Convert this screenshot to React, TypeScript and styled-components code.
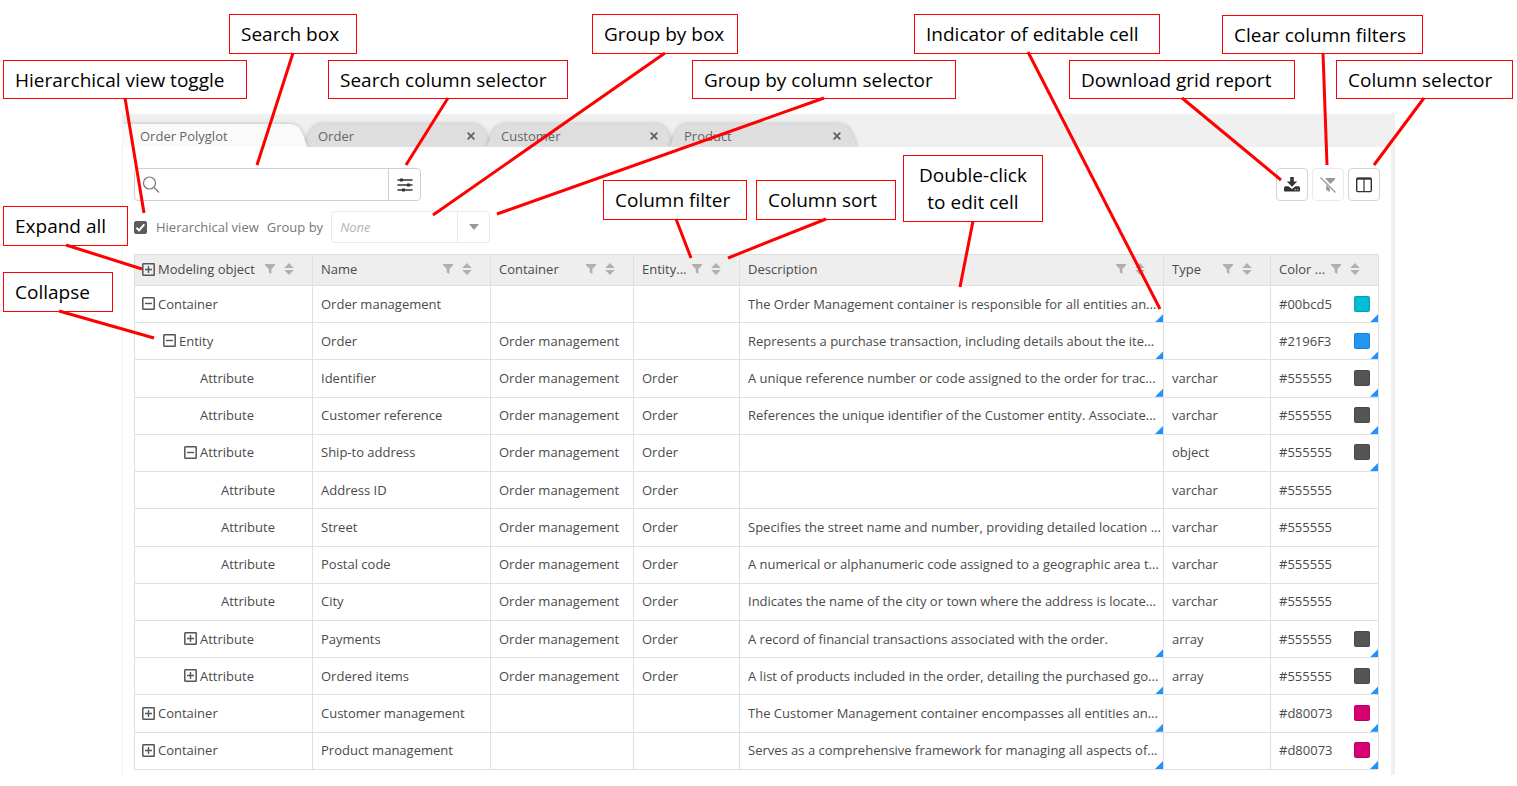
import React from 'react';
import styled, { createGlobalStyle, css } from 'styled-components';

const GlobalStyle = createGlobalStyle`
  *, *::before, *::after { box-sizing: border-box; }
  body {
    margin: 0;
    background: #fff;
    color: #4a4a4a;
    font-family: 'Open Sans', 'Noto Sans', sans-serif;
    font-size: 13px;
    line-height: 18px;
  }
  button, input { font: inherit; color: inherit; }
`;

const Page = styled.main`
  position: relative;
  min-height: 786px;
  padding: 114px 122px 11px;
`;

const Panel = styled.section`
  padding-bottom: 5px;
  border-left: 1px solid #f0f0f0;
  border-right: 4px solid #f0f0f0;
`;

const TabStrip = styled.nav`
  display: flex;
  align-items: flex-end;
  height: 33px;
  padding-top: 10px;
  background: #f0f0f0;
  overflow: hidden;
`;

const TabItem = styled.div<{ $active?: boolean }>`
  position: relative;
  z-index: ${p => (p.$active ? 1 : 0)};
  display: flex;
  align-items: center;
  justify-content: space-between;
  width: 183px;
  height: 23px;
  padding: 0 14px 0 ${p => (p.$active ? 17 : 12)}px;
  color: #666;
`;

const TabShape = styled.svg`
  position: absolute;
  top: -3px;
  left: -3px;
  overflow: visible;
  filter: drop-shadow(0 0 2px rgba(0, 0, 0, 0.25));
`;

const TabLabel = styled.button`
  position: relative;
  padding: 0;
  border: 0;
  background: none;
`;

const TabClose = styled(TabLabel)`
  display: flex;
  color: #606060;
`;

const Toolbar = styled.div`
  display: flex;
  justify-content: space-between;
  padding: 21px 11px 0;
`;

const SearchGroup = styled.div`
  display: flex;
  align-items: center;
  width: 287px;
  height: 33px;
  border: 1px solid #d0d0d0;
  border-radius: 4px;
`;

const SearchIcon = styled.svg`
  flex: none;
  margin-left: 7px;
`;

const TextInput = styled.input<{ $italic?: boolean }>`
  flex: 1;
  min-width: 0;
  padding: 0 8px;
  border: 0;
  outline: 0;
  background: none;
  font-style: ${p => (p.$italic ? 'italic' : 'normal')};
  &::placeholder { color: #b4b4b4; opacity: 1; }
`;

const AddonButton = styled.button<{ $light?: boolean }>`
  display: flex;
  align-items: center;
  justify-content: center;
  align-self: stretch;
  width: 32px;
  padding: 0;
  border: 0;
  border-left: 1px solid ${p => (p.$light ? '#e9e9e9' : '#d0d0d0')};
  background: none;
`;

const Actions = styled.div`
  display: flex;
  gap: 4px;
`;

const IconButton = styled.button`
  display: flex;
  align-items: center;
  justify-content: center;
  width: 32px;
  height: 33px;
  padding: 0;
  border: 1px solid #d4d4d4;
  border-radius: 4px;
  background: #fff;
  color: #333;
  &:disabled { border-color: #ebebeb; color: #999; }
`;

const Options = styled.div`
  display: flex;
  align-items: center;
  gap: 8px;
  padding: 10px 11px 11px;
  color: #777;
`;

const CheckLabel = styled.label`
  display: flex;
  align-items: center;
  gap: 9px;
`;

const CheckHolder = styled.span`
  position: relative;
  display: flex;
`;

const Checkbox = styled.input`
  appearance: none;
  width: 13px;
  height: 13px;
  margin: 0;
  border: 1px solid #5c5c5c;
  border-radius: 2px;
  &:checked { background: #5c5c5c; }
  &:not(:checked) + svg { display: none; }
`;

const CheckMark = styled.svg`
  position: absolute;
  inset: 0;
  pointer-events: none;
`;

const Combo = styled.div`
  display: flex;
  width: 159px;
  height: 32px;
  border: 1px solid #e9e9e9;
  border-radius: 4px;
`;

const GridWrap = styled.div`
  padding: 0 12px 0 11px;
`;

const Grid = styled.table`
  width: 100%;
  table-layout: fixed;
  border-collapse: separate;
  border-spacing: 0;
  border-top: 1px solid #dedede;
  border-left: 1px solid #dedede;
`;

const Body = styled.tbody`
  height: 484px;
`;

const cell = css`
  padding: 0 1px 1px 8px;
  border-right: 1px solid #e0e0e0;
  border-bottom: 1px solid #e0e0e0;
  text-align: left;
  font-weight: 400;
  &:first-child { padding-left: 7px; }
`;

const HeadCell = styled.th`
  ${cell}
  height: 31px;
  padding-bottom: 2px;
  background: #eee;
`;

const HeadContent = styled.div`
  display: flex;
  align-items: center;
  padding-right: 17px;
`;

const HeadLabel = styled.span`
  flex: 1;
  min-width: 0;
  white-space: nowrap;
`;

const HeadTool = styled.button`
  display: flex;
  flex: none;
  padding: 0;
  margin-left: 4px;
  border: 0;
  background: none;
  color: #b0b0b0;
  & + & { margin-left: 9px; }
`;

const Cell = styled.td`
  ${cell}
  position: relative;
`;

const CellText = styled.div`
  overflow: hidden;
  text-overflow: ellipsis;
  white-space: nowrap;
`;

const TreeCell = styled.div<{ $level: number }>`
  display: flex;
  align-items: center;
  gap: 3px;
  padding-left: ${p => p.$level * 21}px;
`;

const Toggle = styled.button`
  display: flex;
  flex: none;
  width: 13px;
  padding: 0;
  border: 0;
  background: none;
  color: #555;
`;

const ToggleGap = styled.span`
  width: 13px;
`;

const ColorValue = styled.div`
  display: flex;
  align-items: center;
  justify-content: space-between;
  padding-right: 7px;
`;

const Swatch = styled.span<{ $color: string }>`
  width: 16px;
  height: 16px;
  border: 1px solid rgba(0, 0, 0, 0.15);
  border-radius: 2px;
  background: ${p => p.$color};
`;

const EditMark = styled.span`
  position: absolute;
  right: 0;
  bottom: 0;
  width: 8px;
  height: 8px;
  background: #1e90ff;
  clip-path: polygon(100% 0, 100% 100%, 0 100%);
`;

const Pointers = styled.svg`
  position: absolute;
  z-index: 2;
  top: 0;
  left: 0;
  width: 100%;
  height: 100%;
  pointer-events: none;
`;

const Callout = styled.div<{ $x: number; $y: number; $w: number; $h: number; $center?: boolean }>`
  position: absolute;
  left: ${p => p.$x}px;
  top: ${p => p.$y}px;
  display: flex;
  align-items: center;
  justify-content: ${p => (p.$center ? 'center' : 'flex-start')};
  width: ${p => p.$w}px;
  height: ${p => p.$h}px;
  padding: 1px 0 0 ${p => (p.$center ? 0 : 11)}px;
  border: 1px solid #f00;
  background: #fff;
  color: #000;
  font-family: 'Open Sans', sans-serif;
  font-size: 19px;
  line-height: 27px;
  text-align: ${p => (p.$center ? 'center' : 'left')};
  white-space: pre-line;
`;

const ToggleIcon = ({ open }: { open: boolean }) => (
  <svg width="13" height="13" viewBox="0 0 13 13" fill="none" stroke="currentColor" aria-hidden="true">
    <rect x="0.8" y="0.8" width="11.4" height="11.4" rx="0.5" strokeWidth="1.5" />
    <path d={open ? 'M3 6.5h7' : 'M3 6.5h7M6.5 3v7'} strokeWidth="1.4" />
  </svg>
);

const FilterIcon = () => (
  <svg width="10" height="10" viewBox="0 0 10 10" fill="currentColor" aria-hidden="true">
    <path d="M0 0h10v1.2L6.4 5v5L3.8 8.4V5L0 1.2z" />
  </svg>
);

const SortIcon = () => (
  <svg width="10" height="12" viewBox="0 0 10 12" fill="currentColor" aria-hidden="true">
    <path d="M5 0l4.8 5H.2zM.2 7h9.6L5 12z" />
  </svg>
);

const CloseIcon = () => (
  <svg width="8" height="8" viewBox="0 0 8 8" stroke="currentColor" strokeWidth="1.8" aria-hidden="true">
    <path d="M0.7 0.7l6.6 6.6M7.3 0.7L0.7 7.3" />
  </svg>
);

type Row = {
  level: number;
  kind: string;
  state?: 'open' | 'closed';
  name: string;
  container?: string;
  entity?: string;
  text?: string;
  textEdit?: boolean;
  type?: string;
  color: string;
  colorEdit?: boolean;
};

const om = 'Order management';
const attr = { kind: 'Attribute', container: om, entity: 'Order', color: '#555555' };

const rows: Row[] = [
  { level: 0, kind: 'Container', state: 'open', name: om, text: 'The Order Management container is responsible for all entities an...', textEdit: true, color: '#00bcd5', colorEdit: true },
  { level: 1, kind: 'Entity', state: 'open', name: 'Order', container: om, text: 'Represents a purchase transaction, including details about the ite...', textEdit: true, color: '#2196F3', colorEdit: true },
  { ...attr, level: 2, name: 'Identifier', text: 'A unique reference number or code assigned to the order for trac...', textEdit: true, type: 'varchar', colorEdit: true },
  { ...attr, level: 2, name: 'Customer reference', text: 'References the unique identifier of the Customer entity. Associate...', textEdit: true, type: 'varchar', colorEdit: true },
  { ...attr, level: 2, state: 'open', name: 'Ship-to address', type: 'object', colorEdit: true },
  { ...attr, level: 3, name: 'Address ID', type: 'varchar' },
  { ...attr, level: 3, name: 'Street', text: 'Specifies the street name and number, providing detailed location ...', type: 'varchar' },
  { ...attr, level: 3, name: 'Postal code', text: 'A numerical or alphanumeric code assigned to a geographic area t...', type: 'varchar' },
  { ...attr, level: 3, name: 'City', text: 'Indicates the name of the city or town where the address is locate...', type: 'varchar' },
  { ...attr, level: 2, state: 'closed', name: 'Payments', text: 'A record of financial transactions associated with the order.', textEdit: true, type: 'array', colorEdit: true },
  { ...attr, level: 2, state: 'closed', name: 'Ordered items', text: 'A list of products included in the order, detailing the purchased go...', textEdit: true, type: 'array', colorEdit: true },
  { level: 0, kind: 'Container', state: 'closed', name: 'Customer management', text: 'The Customer Management container encompasses all entities an...', textEdit: true, color: '#d80073', colorEdit: true },
  { level: 0, kind: 'Container', state: 'closed', name: 'Product management', text: 'Serves as a comprehensive framework for managing all aspects of...', textEdit: true, color: '#d80073', colorEdit: true },
];

const columns = [
  { label: 'Modeling object', width: 178, tree: true },
  { label: 'Name', width: 178 },
  { label: 'Container', width: 143 },
  { label: 'Entity...', width: 106 },
  { label: 'Description' },
  { label: 'Type', width: 107 },
  { label: 'Color ...', width: 108 },
];

const callouts = [
  { text: 'Search box', x: 229, y: 14, w: 128, h: 40 },
  { text: 'Hierarchical view toggle', x: 3, y: 60, w: 244, h: 39 },
  { text: 'Search column selector', x: 328, y: 60, w: 240, h: 39 },
  { text: 'Group by box', x: 592, y: 14, w: 146, h: 40 },
  { text: 'Group by column selector', x: 692, y: 60, w: 264, h: 39 },
  { text: 'Indicator of editable cell', x: 914, y: 14, w: 246, h: 40 },
  { text: 'Download grid report', x: 1069, y: 60, w: 226, h: 39 },
  { text: 'Clear column filters', x: 1222, y: 15, w: 201, h: 39 },
  { text: 'Column selector', x: 1336, y: 60, w: 177, h: 39 },
  { text: 'Column filter', x: 603, y: 180, w: 144, h: 40 },
  { text: 'Column sort', x: 756, y: 180, w: 140, h: 40 },
  { text: 'Double-click\nto edit cell', x: 903, y: 155, w: 140, h: 67, center: true },
  { text: 'Expand all', x: 3, y: 206, w: 125, h: 40 },
  { text: 'Collapse', x: 3, y: 272, w: 110, h: 40 },
];

const pointers = [
  'M293 53L257 165', 'M125 98L144 213', 'M448 98L406 165', 'M665 53L433 215', 'M824 98L497 214',
  'M1028 52L1160 309', 'M1182 98L1281 180', 'M1323 53L1327 165', 'M1424 98L1374 165',
  'M676 219L691 258', 'M826 219L728 258', 'M973 221L960 287', 'M66 245L142 269', 'M59 311L154 338',
];

const Tab = ({ label, active }: { label: string; active?: boolean }) => (
  <TabItem $active={active}>
    <TabShape width="190" height="26" viewBox="0 0 190 26" aria-hidden="true">
      {active ? (
        <path d="M3 3H170C180 3 183 12 187 26H3z" fill="#fafafa" />
      ) : (
        <path d="M1 26C6 12 8 3 20 3H170C180 3 183 12 188 26z" fill="#dedede" />
      )}
    </TabShape>
    <TabLabel type="button">{label}</TabLabel>
    {!active && (
      <TabClose type="button" aria-label={`Close ${label}`}>
        <CloseIcon />
      </TabClose>
    )}
  </TabItem>
);

export default function App() {
  return (
    <Page>
      <GlobalStyle />
      <Panel>
        <TabStrip>
          <Tab label="Order Polyglot" active />
          <Tab label="Order" />
          <Tab label="Customer" />
          <Tab label="Product" />
        </TabStrip>
        <Toolbar>
          <SearchGroup>
            <SearchIcon width="18" height="18" viewBox="0 0 18 18" fill="none" stroke="#777" strokeWidth="1.2" aria-hidden="true">
              <circle cx="7.5" cy="7" r="6" />
              <path d="M12 11.5l5 5" />
            </SearchIcon>
            <TextInput type="text" aria-label="Search" />
            <AddonButton type="button" aria-label="Search columns">
              <svg width="16" height="14" viewBox="0 0 16 14" fill="#333" stroke="#333" aria-hidden="true">
                <path d="M0.5 2h15M0.5 7h15M0.5 12h15" strokeWidth="1.3" />
                <path d="M3 .5h3v3H3zM10 5.5h3v3h-3zM5 10.5h3v3H5z" stroke="none" />
              </svg>
            </AddonButton>
          </SearchGroup>
          <Actions>
            <IconButton type="button" aria-label="Download grid report">
              <svg width="16" height="16" viewBox="0 0 16 16" fill="currentColor" aria-hidden="true">
                <path d="M6.2 0h3.6v4.5h3.4L8 9.8 2.8 4.5h3.4z" />
                <path fillRule="evenodd" d="M1.2 9.2h3.2L8 12l3.6-2.8h3.2L16 10.6v3.2q0 .8-.8.8H.8q-.8 0-.8-.8v-3.2zM10.8 12.3v1h1v-1zM13.2 12.3v1h1v-1z" />
              </svg>
            </IconButton>
            <IconButton type="button" disabled aria-label="Clear column filters">
              <svg width="16" height="16" viewBox="0 0 16 16" fill="currentColor" aria-hidden="true">
                <path d="M5 1h10v1.4L10.3 7zM6.2 7.6l3.6 3.8V15l-3.6-2z" />
                <path d="M.5.5l15 15" stroke="currentColor" strokeWidth="1.2" />
              </svg>
            </IconButton>
            <IconButton type="button" aria-label="Column selector">
              <svg width="16" height="16" viewBox="0 0 16 16" fill="none" stroke="currentColor" aria-hidden="true">
                <rect x="0.7" y="1.2" width="14.6" height="13.4" rx="1" strokeWidth="1.4" />
                <path d="M1 1.7h14" strokeWidth="2" />
                <path d="M8 2v12.5" strokeWidth="1.2" />
              </svg>
            </IconButton>
          </Actions>
        </Toolbar>
        <Options>
          <CheckLabel>
            <CheckHolder>
              <Checkbox type="checkbox" defaultChecked />
              <CheckMark width="13" height="13" viewBox="0 0 13 13" fill="none" stroke="#fff" strokeWidth="2" aria-hidden="true">
                <path d="M2.5 6.8l2.6 2.6 5.2-6" />
              </CheckMark>
            </CheckHolder>
            Hierarchical view
          </CheckLabel>
          <label htmlFor="group-by">Group by</label>
          <Combo>
            <TextInput id="group-by" type="text" placeholder="None" $italic />
            <AddonButton type="button" $light aria-label="Group by columns">
              <svg width="10" height="6" viewBox="0 0 10 6" fill="#999" aria-hidden="true">
                <path d="M0 0h10L5 6z" />
              </svg>
            </AddonButton>
          </Combo>
        </Options>
        <GridWrap>
          <Grid>
            <colgroup>
              {columns.map(c => <col key={c.label} width={c.width} />)}
            </colgroup>
            <thead>
              <tr>
                {columns.map(c => (
                  <HeadCell key={c.label} scope="col">
                    <HeadContent>
                      {c.tree ? (
                        <HeadLabel as={TreeCell} $level={0}>
                          <Toggle type="button" aria-label="Expand all"><ToggleIcon open={false} /></Toggle>
                          {c.label}
                        </HeadLabel>
                      ) : (
                        <HeadLabel>{c.label}</HeadLabel>
                      )}
                      <HeadTool type="button" aria-label={`Filter ${c.label}`}><FilterIcon /></HeadTool>
                      <HeadTool type="button" aria-label={`Sort ${c.label}`}><SortIcon /></HeadTool>
                    </HeadContent>
                  </HeadCell>
                ))}
              </tr>
            </thead>
            <Body>
              {rows.map(r => (
                <tr key={r.name}>
                  <Cell>
                    <TreeCell $level={r.level}>
                      {r.state ? (
                        <Toggle type="button" aria-label={r.state === 'open' ? 'Collapse' : 'Expand'}>
                          <ToggleIcon open={r.state === 'open'} />
                        </Toggle>
                      ) : (
                        <ToggleGap />
                      )}
                      {r.kind}
                    </TreeCell>
                  </Cell>
                  <Cell><CellText>{r.name}</CellText></Cell>
                  <Cell><CellText>{r.container}</CellText></Cell>
                  <Cell><CellText>{r.entity}</CellText></Cell>
                  <Cell>
                    <CellText>{r.text}</CellText>
                    {r.textEdit && <EditMark />}
                  </Cell>
                  <Cell><CellText>{r.type}</CellText></Cell>
                  <Cell>
                    <ColorValue>
                      {r.color}
                      {r.colorEdit && <Swatch $color={r.color} />}
                    </ColorValue>
                    {r.colorEdit && <EditMark />}
                  </Cell>
                </tr>
              ))}
            </Body>
          </Grid>
        </GridWrap>
      </Panel>
      {callouts.map(c => (
        <Callout key={c.text} $x={c.x} $y={c.y} $w={c.w} $h={c.h} $center={c.center}>{c.text}</Callout>
      ))}
      <Pointers aria-hidden="true">
        <path d={pointers.join('')} stroke="#f00" strokeWidth="3" fill="none" />
      </Pointers>
    </Page>
  );
}
